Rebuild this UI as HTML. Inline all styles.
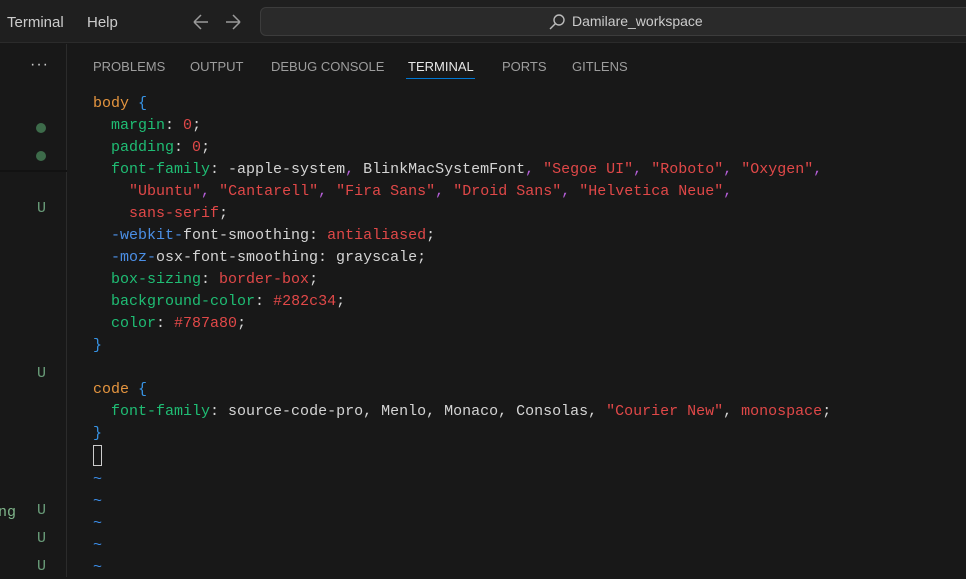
<!DOCTYPE html>
<html><head><meta charset="utf-8"><style>
*{margin:0;padding:0;box-sizing:border-box}
body{width:966px;height:577px;overflow:hidden;background:#181818;position:relative;font-family:"Liberation Sans",sans-serif}
.top{position:absolute;left:0;top:0;width:966px;height:43px;background:#1f1f1f;border-bottom:1px solid #2b2b2b}
.menu{position:absolute;top:14px;font-size:15px;color:#cccccc}
.search{position:absolute;left:260px;top:7px;width:720px;height:29px;background:#2a2a2a;border:1px solid #3c3c3c;border-radius:6px}
.search span{position:absolute;left:311px;top:5px;font-size:14px;color:#cccccc}
.side{position:absolute;left:0;top:44px;width:67px;height:533px;border-right:1px solid #2b2b2b}
.tabs{position:absolute;top:59px;font-size:13px;color:#9d9d9d}
.code{position:absolute;left:93px;top:93px;font-family:"Liberation Mono",monospace;font-size:15px;line-height:22px;color:#d4d4d4;white-space:pre}
.s{color:#e5953f}.b{color:#3794e6}.p{color:#1fbd74}.r{color:#e04848}.m{color:#b55ed8}.v{color:#4b8fe6}.t{color:#3b8eea}
.u{position:absolute;left:37px;font-family:"Liberation Mono",monospace;font-size:15px;color:#6a9e7a}
.dot{position:absolute;left:36px;width:10px;height:10px;border-radius:50%;background:#3d6b4a}
</style></head><body>
<div class="top">
<div class="menu" style="left:7px">Terminal</div>
<div class="menu" style="left:87px">Help</div>
<svg style="position:absolute;left:192px;top:13px" width="50" height="18" viewBox="0 0 50 18" fill="none" stroke="#9a9a9a" stroke-width="1.5"><path d="M2 9H16M2 9L9 2M2 9L9 16"/><path d="M48 9H34M48 9L41 2M48 9L41 16"/></svg>
<div class="search"><svg style="position:absolute;left:287px;top:5px" width="18" height="18" viewBox="0 0 18 18" fill="none" stroke="#bbbbbb" stroke-width="1.4"><circle cx="11" cy="7" r="5"/><path d="M7.5 10.5L2 16"/></svg><span>Damilare_workspace</span></div>
</div>
<div class="side">
<div style="position:absolute;left:30px;top:12px;color:#ccc;font-size:16px;letter-spacing:1px">···</div>
<div class="dot" style="top:79px"></div>
<div class="dot" style="top:107px"></div>
<div style="position:absolute;left:0;top:126px;width:67px;height:2px;background:#121212"></div>
</div>
<div class="u" style="top:200px">U</div>
<div class="u" style="top:365px">U</div>
<div style="position:absolute;left:-2px;top:504px;font-family:'Liberation Mono',monospace;font-size:15px;color:#7fb58a">ng</div>
<div class="u" style="top:502px">U</div>
<div class="u" style="top:530px">U</div>
<div class="u" style="top:558px">U</div>
<div class="tabs" style="left:93px">PROBLEMS</div>
<div class="tabs" style="left:190px">OUTPUT</div>
<div class="tabs" style="left:271px">DEBUG CONSOLE</div>
<div class="tabs" style="left:408px;color:#e7e7e7">TERMINAL</div>
<div style="position:absolute;left:406px;top:78px;width:69px;height:1px;background:#0078d4"></div>
<div class="tabs" style="left:502px">PORTS</div>
<div class="tabs" style="left:572px">GITLENS</div>
<div class="code"><span class="s">body</span> <span class="b">{</span>
  <span class="p">margin</span>: <span class="r">0</span>;
  <span class="p">padding</span>: <span class="r">0</span>;
  <span class="p">font-family</span>: -apple-system<span class="m">,</span> BlinkMacSystemFont<span class="m">,</span> <span class="r">"Segoe UI"</span><span class="m">,</span> <span class="r">"Roboto"</span><span class="m">,</span> <span class="r">"Oxygen"</span><span class="m">,</span>
    <span class="r">"Ubuntu"</span><span class="m">,</span> <span class="r">"Cantarell"</span><span class="m">,</span> <span class="r">"Fira Sans"</span><span class="m">,</span> <span class="r">"Droid Sans"</span><span class="m">,</span> <span class="r">"Helvetica Neue"</span><span class="m">,</span>
    <span class="r">sans-serif</span>;
  <span class="v">-webkit-</span>font-smoothing: <span class="r">antialiased</span>;
  <span class="v">-moz-</span>osx-font-smoothing: grayscale;
  <span class="p">box-sizing</span>: <span class="r">border-box</span>;
  <span class="p">background-color</span>: <span class="r">#282c34</span>;
  <span class="p">color</span>: <span class="r">#787a80</span>;
<span class="b">}</span>

<span class="s">code</span> <span class="b">{</span>
  <span class="p">font-family</span>: source-code-pro, Menlo, Monaco, Consolas, <span class="r">"Courier New"</span>, <span class="r">monospace</span>;
<span class="b">}</span>
<span style="display:inline-block;width:9px;height:21px;border:1px solid #ccc;vertical-align:-5px"></span>
<span class="t">~</span>
<span class="t">~</span>
<span class="t">~</span>
<span class="t">~</span>
<span class="t">~</span></div>
</body></html>
